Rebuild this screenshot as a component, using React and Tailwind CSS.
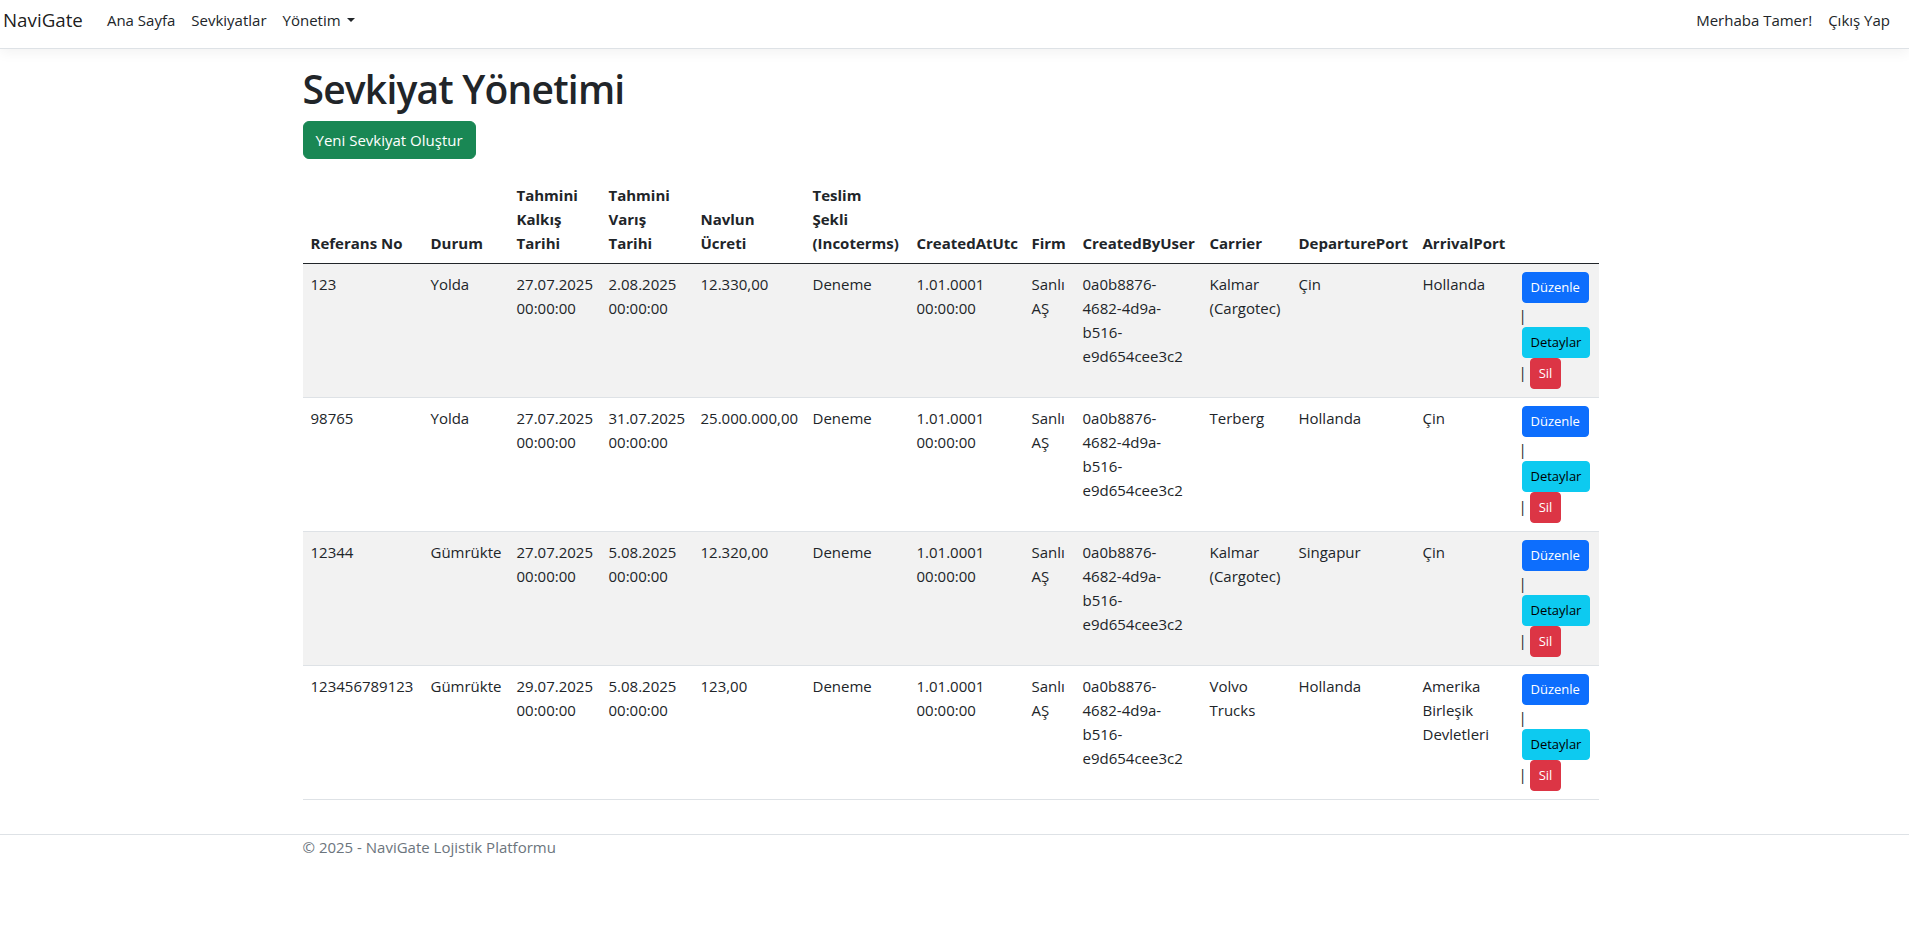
const guid = '0a0b8876-4682-4d9a-b516-e9d654cee3c2';

const columns = [
  { label: 'Referans No', w: 'w-[120px]' },
  { label: 'Durum', w: 'w-[86px]' },
  { label: 'Tahmini Kalkış Tarihi', w: 'w-[92px]' },
  { label: 'Tahmini Varış Tarihi', w: 'w-[92px]' },
  { label: 'Navlun Ücreti', w: 'w-[112px]' },
  { label: 'Teslim Şekli (Incoterms)', w: 'w-[104px]' },
  { label: 'CreatedAtUtc', w: 'w-[115px]' },
  { label: 'Firm', w: 'w-[51px]' },
  { label: 'CreatedByUser', w: 'w-[127px]' },
  { label: 'Carrier', w: 'w-[89px]' },
  { label: 'DeparturePort', w: 'w-[124px]' },
  { label: 'ArrivalPort', w: 'w-[99px]' },
  { label: '', w: 'w-[85px]' },
];

const shipments = [
  ['123', 'Yolda', '27.07.2025 00:00:00', '2.08.2025 00:00:00', '12.330,00', 'Deneme', '1.01.0001 00:00:00', 'Sanlı AŞ', guid, 'Kalmar (Cargotec)', 'Çin', 'Hollanda'],
  ['98765', 'Yolda', '27.07.2025 00:00:00', '31.07.2025 00:00:00', '25.000.000,00', 'Deneme', '1.01.0001 00:00:00', 'Sanlı AŞ', guid, 'Terberg', 'Hollanda', 'Çin'],
  ['12344', 'Gümrükte', '27.07.2025 00:00:00', '5.08.2025 00:00:00', '12.320,00', 'Deneme', '1.01.0001 00:00:00', 'Sanlı AŞ', guid, 'Kalmar (Cargotec)', 'Singapur', 'Çin'],
  ['123456789123', 'Gümrükte', '29.07.2025 00:00:00', '5.08.2025 00:00:00', '123,00', 'Deneme', '1.01.0001 00:00:00', 'Sanlı AŞ', guid, 'Volvo Trucks', 'Hollanda', 'Amerika Birleşik Devletleri'],
];

function Navbar() {
  return (
    <nav className="h-[49px] border-b border-[#dee2e6] bg-white shadow-[0_4px_12px_rgba(0,0,0,0.05)] pl-[3px] pr-[11px] flex items-start justify-between">
      <div className="flex items-center h-10">
        <a href="#" className="text-[18.75px] leading-10 text-black/90 mr-4">NaviGate</a>
        <a href="#" className="px-2 leading-10 text-[#212529]">Ana Sayfa</a>
        <a href="#" className="px-2 leading-10 text-[#212529]">Sevkiyatlar</a>
        <a href="#" className="px-2 leading-10 text-[#212529] flex items-center">
          Yönetim
          <span className="ml-[0.45em] inline-block border-t-[0.3em] border-x-[0.3em] border-b-0 border-t-[#212529] border-x-transparent"></span>
        </a>
      </div>
      <div className="flex items-center h-10">
        <span className="px-2 leading-10 text-[#212529]">Merhaba Tamer!</span>
        <a href="#" className="px-2 leading-10 text-[#212529]">Çıkış Yap</a>
      </div>
    </nav>
  );
}

const Sep = () => (
  <>
    {' '}
    <span className="-ml-[3px] -mr-[1px]">|</span>{' '}
  </>
);

function Actions() {
  return (
    <>
      <a href="#" className="inline-block align-middle px-2 py-1 text-[13px] leading-[21px] rounded border border-[#0d6efd] bg-[#0d6efd] text-white">Düzenle</a>
      <Sep />
      <a href="#" className="inline-block align-middle px-2 py-1 text-[13px] leading-[21px] rounded border border-[#0dcaf0] bg-[#0dcaf0] text-black">Detaylar</a>
      <Sep />
      <a href="#" className="inline-block align-middle px-2 py-1 text-[13px] leading-[21px] rounded border border-[#dc3545] bg-[#dc3545] text-white">Sil</a>
    </>
  );
}

export default function App() {
  return (
    <div className="min-h-screen bg-white text-[#212529] text-[15px] leading-6 font-['Open_Sans',sans-serif]">
      <Navbar />

      <main className="w-[1320px] mx-auto pl-2 pr-4 pt-4 pb-[18px]">
        <h1 className="text-[39px] leading-[48px] font-semibold tracking-[-0.8px] mb-2">Sevkiyat Yönetimi</h1>
        <div className="flex mb-4">
          <a href="#" className="inline-flex px-3 py-[6px] leading-6 rounded-md border border-[#198754] bg-[#198754] text-white">
            Yeni Sevkiyat Oluştur
          </a>
        </div>

        <table className="w-full table-fixed border-collapse mb-4">
          <thead>
            <tr>
              {columns.map((c, i) => (
                <th key={i} className={`${c.w} p-2 text-left align-bottom font-bold border-b border-[#212529]`}>
                  {c.label}
                </th>
              ))}
            </tr>
          </thead>
          <tbody>
            {shipments.map((row, r) => (
              <tr key={r} className={r % 2 === 0 ? 'bg-[#f2f2f2]' : 'bg-white'}>
                {row.map((cell, i) => (
                  <td key={i} className="p-2 align-top border-b border-[#dee2e6] break-normal">
                    {cell}
                  </td>
                ))}
                <td className="p-2 align-top border-b border-[#dee2e6]">
                  <Actions />
                </td>
              </tr>
            ))}
          </tbody>
        </table>
      </main>

      <footer className="border-t border-[#dee2e6] text-[#6c757d]">
        <div className="w-[1320px] mx-auto pl-2 pr-4 leading-6">
          © 2025 - NaviGate Lojistik Platformu
        </div>
      </footer>
    </div>
  );
}
